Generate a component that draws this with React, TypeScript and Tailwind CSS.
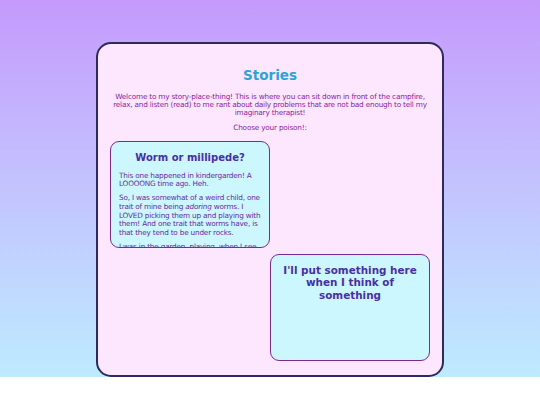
export default function App() {
  return (
    <div className="w-[540px] h-[405px] bg-white" style={{ fontFamily: '"DejaVu Sans", Verdana, sans-serif' }}>
      <div className="h-[377px] bg-gradient-to-b from-[#c49afc] to-[#bdebfe] pt-[42px]">
        {/* Main card */}
        <div className="mx-auto w-[348px] h-[335px] rounded-[15px] border-2 border-[#2e2a5c] bg-[#fde7fe] px-[12px] pt-[23px] pb-[14px] flex flex-col">
          <h1 className="text-center text-[13.5px] font-bold text-[#2fa3d4] leading-[17px]">Stories</h1>
          <p className="mt-[9px] text-center text-[7.3px] tracking-[-0.2px] leading-[8.2px] text-[#8a1ea0]">
            Welcome to my story-place-thing! This is where you can sit down in front of the campfire,
            relax, and listen (read) to me rant about daily problems that are not bad enough to tell my
            imaginary therapist!
          </p>
          <p className="mt-[6px] text-center text-[7.3px] tracking-[-0.2px] leading-[8.2px] text-[#8a1ea0]">Choose your poison!:</p>

          <div className="mt-[9px] flex flex-col">
            <div className="self-start w-[160px] h-[107px] overflow-hidden rounded-[9px] border-[1.5px] border-[#7b2b8f] bg-[#ccf7fe] px-[7px] pt-[9px]">
              <h2 className="text-center text-[10px] font-bold text-[#4a2fa4] leading-[13px]">Worm or millipede?</h2>
              <div className="mt-[8px] pl-[1px] text-[7.3px] tracking-[-0.2px] leading-[8.6px] text-[#6b2aa0] flex flex-col gap-[5.4px]">
                <p>This one happened in kindergarden! A LOOOONG time ago. Heh.</p>
                <p>
                  So, I was somewhat of a weird child, one trait of mine being <i>adoring</i> worms. I LOVED
                  picking them up and playing with them! And one trait that worms have, is that they tend to be
                  under rocks.
                </p>
                <p>I was in the garden, playing, when I see something under a rock.</p>
              </div>
            </div>
            <div className="self-end mt-[6px] w-[160px] h-[107px] overflow-hidden rounded-[9px] border-[1.5px] border-[#7b2b8f] bg-[#ccf7fe] px-[8px] pt-[9px]">
              <h2 className="text-center text-[10.4px] font-bold text-[#4a2fa4] leading-[12.5px]">
                I'll put something here when I think of something
              </h2>
            </div>
          </div>
        </div>
      </div>
    </div>
  );
}
